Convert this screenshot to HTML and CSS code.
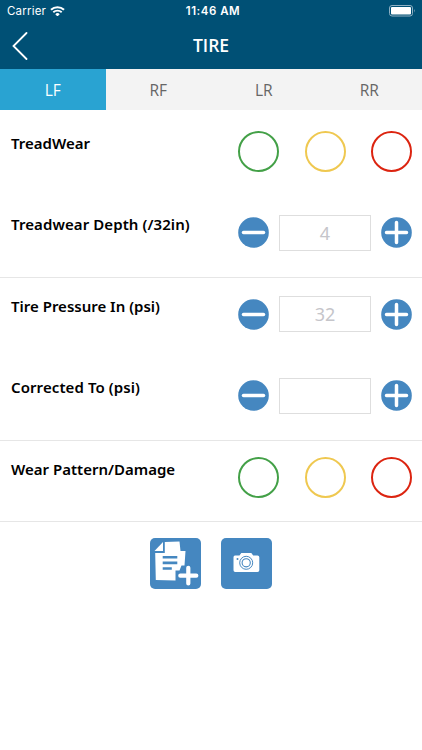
FILE: index.html
```html
<!DOCTYPE html>
<html lang="en">
<head>
    <meta charset="UTF-8">
    <meta name="viewport" content="width=device-width, initial-scale=1.0">
    <title>Tire</title>
    <link rel="stylesheet" href="styles.css">
</head>
<body>
    <header class="header">
        <div class="status-bar">
            <div class="carrier">
                <span>Carrier</span>
                <svg class="wifi" viewBox="0 0 14 10" width="15" height="10.5">
                    <path d="M0.8 3.6 A9 9 0 0 1 13.2 3.6" fill="none" stroke="#fff" stroke-width="2"/>
                    <path d="M3 6 A5.8 5.8 0 0 1 11 6" fill="none" stroke="#fff" stroke-width="1.8"/>
                    <path d="M4.9 7.8 A3 3 0 0 1 9.1 7.8 L7 10 Z" fill="#fff"/>
                </svg>
            </div>
            <div class="time">11:46 AM</div>
            <div class="battery">
                <svg viewBox="0 0 27 12" width="27" height="12">
                    <rect x="0.5" y="0.5" width="23" height="10.5" rx="2.5" fill="none" stroke="#8fb0c3"/>
                    <rect x="2" y="2" width="20" height="7.5" rx="1" fill="#fff"/>
                    <path d="M25 4 Q26.5 5.7 25 7.5 Z" fill="#8fb0c3"/>
                </svg>
            </div>
        </div>
        <div class="nav-bar">
            <a class="back" aria-label="Back">
                <svg viewBox="0 0 16 28" width="16" height="28">
                    <path d="M14.5 1 L1.5 14 L14.5 27" fill="none" stroke="#fff" stroke-width="1.8" stroke-linecap="round"/>
                </svg>
            </a>
            <h1>TIRE</h1>
        </div>
    </header>

    <nav class="tabs">
        <a class="tab active">LF</a>
        <a class="tab">RF</a>
        <a class="tab">LR</a>
        <a class="tab">RR</a>
    </nav>

    <main class="form">
        <div class="row">
            <label>TreadWear</label>
            <div class="rating">
                <span class="circle green"></span>
                <span class="circle yellow"></span>
                <span class="circle red"></span>
            </div>
        </div>
        <div class="row line">
            <label class="wide">Treadwear Depth (/32in)</label>
            <div class="stepper">
                <svg class="step" viewBox="0 0 31 31"><circle cx="15.5" cy="15.5" r="15.3"/><path d="M5.5 15.5 H25.5"/></svg>
                <input type="text" placeholder="4">
                <svg class="step" viewBox="0 0 31 31"><circle cx="15.5" cy="15.5" r="15.3"/><path d="M5.5 15.5 H25.5 M15.5 5.5 V25.5"/></svg>
            </div>
        </div>
        <div class="row">
            <label>Tire Pressure In (psi)</label>
            <div class="stepper">
                <svg class="step" viewBox="0 0 31 31"><circle cx="15.5" cy="15.5" r="15.3"/><path d="M5.5 15.5 H25.5"/></svg>
                <input type="text" placeholder="32">
                <svg class="step" viewBox="0 0 31 31"><circle cx="15.5" cy="15.5" r="15.3"/><path d="M5.5 15.5 H25.5 M15.5 5.5 V25.5"/></svg>
            </div>
        </div>
        <div class="row line">
            <label class="wide">Corrected To (psi)</label>
            <div class="stepper">
                <svg class="step" viewBox="0 0 31 31"><circle cx="15.5" cy="15.5" r="15.3"/><path d="M5.5 15.5 H25.5"/></svg>
                <input type="text">
                <svg class="step" viewBox="0 0 31 31"><circle cx="15.5" cy="15.5" r="15.3"/><path d="M5.5 15.5 H25.5 M15.5 5.5 V25.5"/></svg>
            </div>
        </div>
        <div class="row line">
            <label>Wear Pattern/Damage</label>
            <div class="rating">
                <span class="circle green"></span>
                <span class="circle yellow"></span>
                <span class="circle red"></span>
            </div>
        </div>
    </main>

    <div class="actions">
        <button class="action" aria-label="Add note">
            <svg viewBox="0 0 51 51" width="51" height="51">
                <!-- pages -->
                <path d="M14.8 4 L29.5 3.5 L30.5 13 H35.5 L34.5 27.5 H31.5 L29.5 32.5 H25.5 V42.5 L5.8 42 L5.2 15 H14.8 Z" fill="#fff"/>
                <path d="M4.5 13 L13 4 V13 Z" fill="#fff"/>
                <path d="M12.7 19.3 H27.3 M12.7 24.9 H27.3 M12.7 30.5 H21.8" stroke="#4587c0" stroke-width="2.6"/>
                <!-- plus -->
                <path d="M38.3 30 V46 M30.3 37.7 H46.3" stroke="#4587c0" stroke-width="7" stroke-linecap="round"/>
                <path d="M38.3 29.8 V45.5 M30.3 37.7 H46.3" stroke="#fff" stroke-width="4.2" stroke-linecap="round"/>
            </svg>
        </button>
        <button class="action" aria-label="Take photo">
            <svg viewBox="0 0 51 51" width="51" height="51">
                <path d="M14 17.5 H18.5 L20.3 15 H30.3 L32.2 17.5 H36.5 Q38.3 17.5 38.3 19.3 V32.3 Q38.3 34 36.5 34 H14.2 Q12.5 34 12.5 32.3 V19.3 Q12.5 17.5 14 17.5 Z" fill="#fff"/>
                <circle cx="25.2" cy="24.8" r="6.5" fill="none" stroke="#4587c0" stroke-width="1"/>
                <circle cx="25.2" cy="24.8" r="4.1" fill="none" stroke="#4587c0" stroke-width="1.1"/>
                <circle cx="16.5" cy="21" r="1" fill="#4587c0"/>
            </svg>
        </button>
    </div>
</body>
</html>
```

FILE: styles.css
```css
* {
    box-sizing: border-box;
}
body {
    margin: 0;
    background-color: #fff;
    color: #000;
    font-family: "Noto Sans", "Open Sans", sans-serif;
}
.header {
    height: 69px;
    background-color: #005075;
    color: #fff;
}
.status-bar {
    display: grid;
    grid-template-columns: 1fr auto 1fr;
    align-items: center;
    height: 22px;
    padding: 0 6px 0 7px;
    font-family: Inter, "Liberation Sans", sans-serif;
    font-size: 11.5px;
    line-height: 22px;
}
.carrier {
    display: flex;
    align-items: center;
    gap: 4px;
    letter-spacing: 0.2px;
}
.time {
    padding-left: 3px;
    font-weight: 600;
    letter-spacing: 0.5px;
}
.battery {
    display: flex;
    justify-content: flex-end;
}
.nav-bar {
    display: grid;
    grid-template-columns: 40px 1fr 40px;
    align-items: center;
    height: 47px;
}
.back {
    display: flex;
    padding-left: 12px;
}
h1 {
    margin: 0;
    padding-bottom: 2px;
    font-family: "Open Sans", sans-serif;
    font-size: 17.5px;
    font-weight: 600;
    line-height: 24px;
    text-align: center;
}
.tabs {
    display: flex;
    height: 41px;
    background-color: #f3f3f3;
}
.tab {
    flex: 1;
    font-family: "Open Sans", sans-serif;
    font-size: 15.5px;
    font-weight: 500;
    line-height: 43px;
    text-align: center;
    color: #666;
}
.tab.active {
    background-color: #29a3d2;
    color: #fff;
}
.form {
    padding-top: 4.5px;
}
.row {
    display: flex;
    justify-content: space-between;
    height: 81.5px;
    padding: 16px 10px 0 11px;
}
.line {
    border-bottom: 1px solid #e6e6e6;
}
label {
    font-size: 15px;
    font-weight: 600;
    line-height: 24px;
    white-space: nowrap;
}
.wide {
    letter-spacing: 0.09px;
}
.rating, .stepper {
    display: flex;
    justify-content: space-between;
    align-items: center;
    width: 174px;
    height: 41px;
}
.circle {
    width: 41px;
    height: 41px;
    border: 2px solid;
    border-radius: 50%;
}
.green {
    border-color: #43a047;
}
.yellow {
    border-color: #efc850;
}
.red {
    border-color: #dc2410;
}
.step {
    width: 31px;
    height: 31px;
    fill: #4587c0;
    stroke-linecap: round;
}
.step path {
    stroke: #fff;
    stroke-width: 3.5;
}
input {
    width: 92px;
    height: 36px;
    padding: 0;
    border: 1px solid #dedede;
    background-color: #fff;
    font-family: inherit;
    font-size: 18px;
    text-align: center;
}
input::placeholder {
    color: #c5c5ca;
}
.actions {
    display: flex;
    justify-content: center;
    gap: 20px;
    padding-top: 16px;
}
.action {
    width: 51px;
    height: 51px;
    padding: 0;
    border: none;
    border-radius: 5px;
    background-color: #4587c0;
}
.action svg {
    display: block;
}
```
